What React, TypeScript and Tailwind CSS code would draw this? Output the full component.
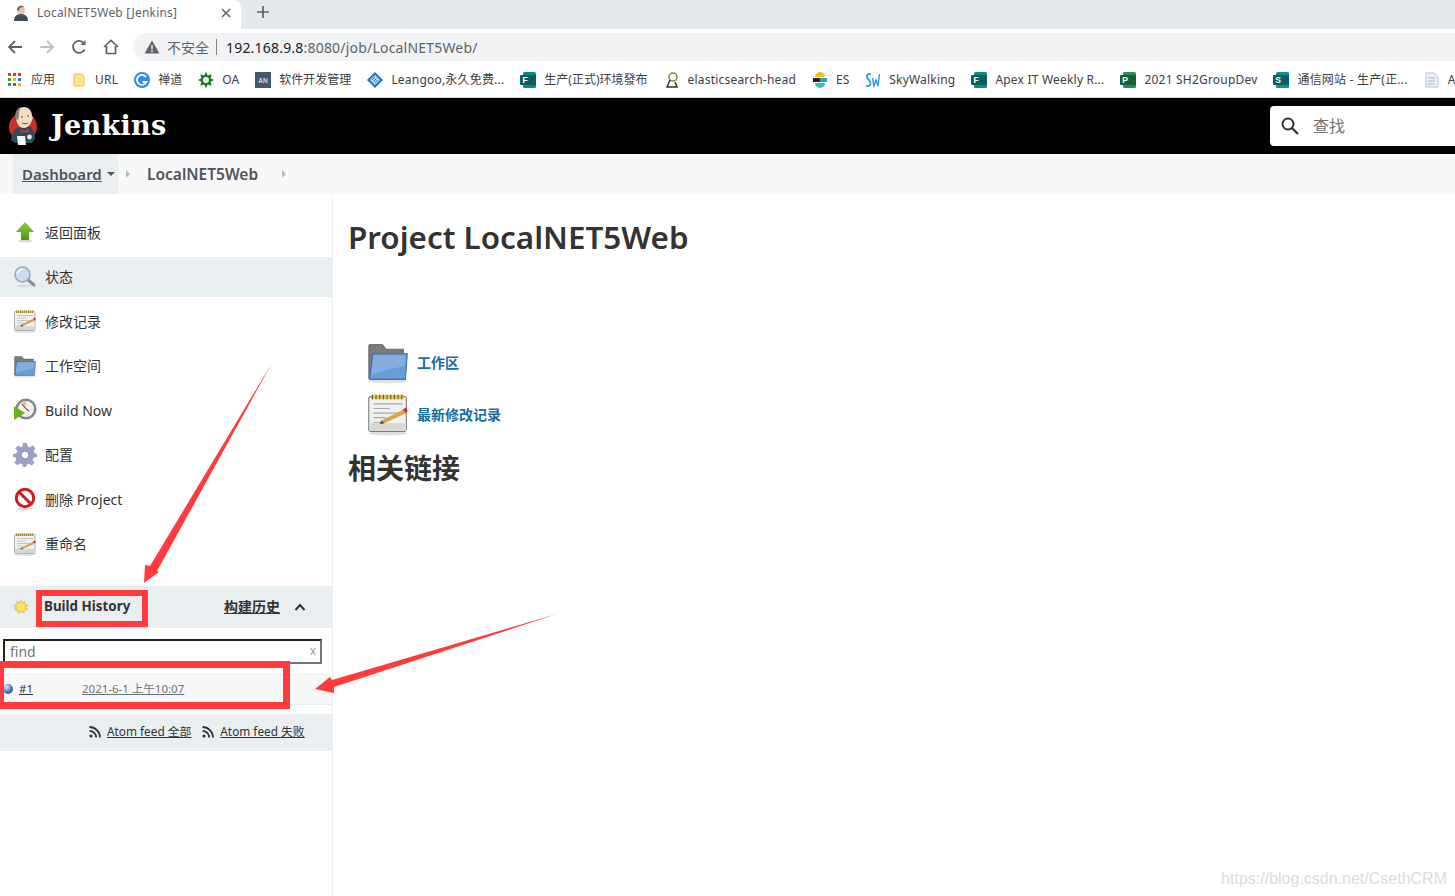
import React from "react";

const sans = "font-['Noto_Sans','Noto_Sans_CJK_SC',sans-serif]";

function JenkinsFace({ className }: { className?: string }) {
  return (
    <svg className={className} viewBox="0 0 32 42" aria-hidden="true">
      <circle cx="16" cy="22" r="14" fill="#c9302c" />
      <path d="M4 35c1-8 4-12 9-13l7-1c5 1 8 5 8 13l-3 4H8z" fill="#2f4a5a" />
      <path d="M9 13C8 6 12 2 17 2s8 4 8 9c1 0 1 3 0 4-1 4-4 8-8 8s-7-3-8-10z" fill="#f3dcc2" />
      <path d="M9 14C7 8 10 3 14 2c-2 3-2 6-2 9l-1 4z" fill="#8d8177" />
      <path d="M13 24l4 2 5-2-1 4-4-1-3 1z" fill="#d8312c" />
      <path d="M10 31h8l1 9h-8z" fill="#f4f4f4" />
      <circle cx="22.500" cy="32" r="2.400" fill="#e8e8e8" />
      <path d="M14 12h2M20 11h2M15 18c2 1 4 1 6 0" stroke="#5a4a42" strokeWidth="1" fill="none" />
    </svg>
  );
}

function UpIcon() {
  return (
    <svg className="size-6" viewBox="0 0 24 24" aria-hidden="true">
      <defs>
        <linearGradient id="up" x1="0" y1="0" x2="0" y2="1">
          <stop offset="0" stopColor="#8ecb4a" />
          <stop offset="1" stopColor="#4c9a12" />
        </linearGradient>
      </defs>
      <ellipse cx="12" cy="21" rx="7" ry="1.500" fill="#d8d8d8" />
      <path d="M12 2l9 10h-5v8H8v-8H3z" fill="url(#up)" />
    </svg>
  );
}

function SearchIcon() {
  return (
    <svg className="size-6" viewBox="0 0 24 24" aria-hidden="true">
      <ellipse cx="11" cy="21" rx="8" ry="1.500" fill="#dcdcdc" />
      <path d="M14.500 14.500l6.500 5.500" stroke="#8b8f93" strokeWidth="3" strokeLinecap="round" />
      <circle cx="9.500" cy="9.500" r="7.500" fill="#c9dcf2" stroke="#9aa6b4" strokeWidth="1.500" />
      <path d="M4.500 9a5 5 0 0 1 5-5" stroke="#fff" strokeWidth="1.600" fill="none" />
    </svg>
  );
}

function NotepadIcon({ className = "size-6" }: { className?: string }) {
  return (
    <svg className={className} viewBox="0 0 48 48" aria-hidden="true">
      <ellipse cx="24" cy="45" rx="21" ry="2.500" fill="#dedede" />
      <rect x="3" y="5" width="41" height="38" rx="2" fill="#f1f1f1" stroke="#7d7d7d" strokeWidth="1.200" />
      <rect x="3.600" y="34" width="39.800" height="8.400" fill="#d8d8d8" />
      <path d="M6 3h35v5H6z" fill="#e1c75a" />
      <path d="M7 3v5M11 3v5M15 3v5M19 3v5M23 3v5M27 3v5M31 3v5M35 3v5M39 3v5" stroke="#6b5c16" strokeWidth="1.200" />
      <path d="M8 13h32M8 18h18M8 23h30M8 28h14M8 33h14" stroke="#a9a9a9" strokeWidth="1.200" />
      <path d="M15 35l2-4 24-12 3 4-24 11z" fill="#dca24a" />
      <path d="M15 35l2-4 3 3z" fill="#5b4630" />
      <path d="M40 19l4-2 1.500 4-2 2z" fill="#e0262c" />
    </svg>
  );
}

function FolderIcon({ className = "size-6" }: { className?: string }) {
  return (
    <svg className={className} viewBox="0 0 48 48" aria-hidden="true">
      <ellipse cx="24" cy="45" rx="22" ry="2.200" fill="#e0e0e0" />
      <path d="M3 6a1 1 0 0 1 1-1h14l4 5h19v32H3z" fill="#7b7b7b" stroke="#555" strokeWidth=".8" />
      <path d="M7 15h38l-2 28H4z" fill="#6c9cd6" stroke="#3f6ca6" strokeWidth="1.200" />
      <path d="M8 17h35l-.8 12C30 30 16 34 6 38z" fill="#84aee0" />
    </svg>
  );
}

function ClockIcon() {
  return (
    <svg className="size-6" viewBox="0 0 24 24" aria-hidden="true">
      <circle cx="13" cy="11" r="10.500" fill="#85839b" />
      <circle cx="13" cy="11" r="8" fill="#f4f1e8" />
      <path d="M13 11L9 4.500A8 8 0 0 1 13 3z" fill="#e3cb73" />
      <path d="M13 11L9 6M13 11l3 2" stroke="#333" strokeWidth="1" />
      <path d="M1 8l11 7-11 7z" fill="#69b31b" />
    </svg>
  );
}

function GearIcon() {
  return (
    <svg className="size-6" viewBox="0 0 24 24" aria-hidden="true">
      <path
        d="M10 0h4l.7 3.400 2.200.9L19.800 2.400l2.800 2.800-1.900 2.900.9 2.200L24 11v3l-3.400.7-.9 2.200 1.900 2.900-2.800 2.800-2.900-1.900-2.200.9L13 24h-3l-.7-2.800-2.200-.9-2.900 1.900-2.800-2.800 1.900-2.900-.9-2.200L0 14v-3l3.400-.7.9-2.200L2.400 5.200l2.800-2.800 2.900 1.900 1.200-.9z"
        fill="#9aa0c6"
      />
      <circle cx="12" cy="12" r="4" fill="#fff" stroke="#7d82a6" />
    </svg>
  );
}

function NoIcon() {
  return (
    <svg className="size-6" viewBox="0 0 24 24" aria-hidden="true">
      <ellipse cx="12" cy="22" rx="8" ry="1.500" fill="#dcdcdc" />
      <circle cx="12" cy="11" r="8.700" fill="#fff" stroke="#cc1f1f" strokeWidth="3" />
      <path d="M6 5l12 12" stroke="#cc1f1f" strokeWidth="3" />
    </svg>
  );
}

function Sun() {
  return (
    <svg className="size-4" viewBox="0 0 16 16" aria-hidden="true">
      <path d="M8 0l1.500 3 3-1.500L12.200 5 16 6l-2.500 2.300L15.500 11l-3.500.5L11 15l-3-2-3 2-1-3.500L.5 11l2-2.700L0 6l3.800-1L3.500 1.500l3 1.500z" fill="#f3c17a" />
      <circle cx="8" cy="8" r="4.200" fill="#fbe74e" />
    </svg>
  );
}

function Rss() {
  return (
    <svg className="size-[12px] shrink-0" viewBox="0 0 12 12" aria-hidden="true">
      <circle cx="2" cy="10" r="1.600" fill="#333" />
      <path d="M.5 4.800a6.700 6.700 0 0 1 6.700 6.700M.5 1a10.500 10.500 0 0 1 10.500 10.500" stroke="#333" strokeWidth="1.800" fill="none" />
    </svg>
  );
}

function OfficeIcon({ letter, color, dark }: { letter: string; color: string; dark: string }) {
  return (
    <svg className="size-4 shrink-0" viewBox="0 0 16 16" aria-hidden="true">
      <rect x="3" y="0" width="13" height="16" rx="1.500" fill={color} />
      <rect x="9" y="3" width="7" height="10" fill={dark} />
      <rect x="0" y="3" width="10" height="10" rx="1" fill={dark} />
      <text x="5" y="11" textAnchor="middle" fontSize="8.500" fontWeight="700" fill="#fff" fontFamily="Liberation Sans, sans-serif">
        {letter}
      </text>
    </svg>
  );
}

const bookmarks: { label: string; latin?: boolean; icon: React.ReactNode }[] = [
  {
    label: "URL",
    latin: true,
    icon: (
      <svg className="size-4 shrink-0" viewBox="0 0 16 16" aria-hidden="true">
        <path d="M3 2h8l2 2v10H3z" fill="#ffe28a" stroke="#f0c64a" />
      </svg>
    ),
  },
  {
    label: "禅道",
    icon: (
      <svg className="size-4 shrink-0" viewBox="0 0 16 16" aria-hidden="true">
        <circle cx="8" cy="8" r="8" fill="#2a8fe8" />
        <path d="M12 5a5 5 0 1 0 .5 5H8.500" stroke="#fff" strokeWidth="1.800" fill="none" />
      </svg>
    ),
  },
  {
    label: "OA",
    latin: true,
    icon: (
      <svg className="size-4 shrink-0" viewBox="0 0 16 16" aria-hidden="true">
        <path d="M8 0l1.800 3.500L13.700 2.300 12.500 6.200 16 8l-3.500 1.800 1.200 3.900-3.900-1.200L8 16l-1.800-3.500-3.900 1.200 1.200-3.900L0 8l3.500-1.800L2.300 2.300l3.900 1.200z" fill="#0f7d16" />
        <circle cx="8" cy="8" r="3" fill="#fff" />
      </svg>
    ),
  },
  {
    label: "软件开发管理",
    icon: (
      <svg className="size-4 shrink-0" viewBox="0 0 16 16" aria-hidden="true">
        <rect width="16" height="16" fill="#44586f" />
        <text x="8" y="10.500" textAnchor="middle" fontSize="6.500" fontWeight="700" fill="#d5dbe2" fontFamily="Liberation Sans, sans-serif">
          AN
        </text>
      </svg>
    ),
  },
  {
    label: "Leangoo,永久免费...",
    latin: true,
    icon: (
      <svg className="size-4 shrink-0" viewBox="0 0 16 16" aria-hidden="true">
        <path d="M8 0l8 8-8 8-8-8z" fill="#1b78c2" />
        <path d="M8 3l5 5-5 5-5-5z" fill="#bcdcf4" />
        <path d="M5 8l3-3M6.500 9.500l3-3M8 11l3-3" stroke="#1b78c2" />
      </svg>
    ),
  },
  { label: "生产(正式)环境發布", icon: <OfficeIcon letter="F" color="#0a8a84" dark="#075f5c" /> },
  {
    label: "elasticsearch-head",
    latin: true,
    icon: (
      <svg className="size-4 shrink-0" viewBox="0 0 16 16" aria-hidden="true">
        <circle cx="9" cy="5" r="4" fill="none" stroke="#6e8f3c" strokeWidth="1.500" />
        <path d="M6 8L3 15h10l-2-5" fill="none" stroke="#333" strokeWidth="1.500" />
      </svg>
    ),
  },
  {
    label: "ES",
    icon: (
      <svg className="size-4 shrink-0" viewBox="0 0 16 16" aria-hidden="true">
        <path d="M3 5a5 5 0 0 1 10 0z" fill="#f0bf1a" />
        <rect x="1" y="6" width="7" height="4" fill="#222" />
        <rect x="8" y="6" width="7" height="4" fill="#1ba9c7" />
        <path d="M3 11h10a5 5 0 0 1-10 0z" fill="#3ebeb0" />
      </svg>
    ),
  },
  {
    label: "SkyWalking",
    latin: true,
    icon: (
      <svg className="size-4 shrink-0" viewBox="0 0 16 16" aria-hidden="true">
        <path d="M6 2.500C3 1 1 3 2 5.500c1 2 4 3 3.500 6C5 14 2.500 14.500 1 13.500" fill="none" stroke="#2b9be8" strokeWidth="1.800" />
        <path d="M7.500 6l1.500 8 2-6 2 6 1.500-12" fill="none" stroke="#2b9be8" strokeWidth="1.400" />
      </svg>
    ),
  },
  { label: "Apex IT Weekly R...", latin: true, icon: <OfficeIcon letter="F" color="#0a8a84" dark="#075f5c" /> },
  { label: "2021 SH2GroupDev", latin: true, icon: <OfficeIcon letter="P" color="#2e8b57" dark="#14603a" /> },
  { label: "通信网站 - 生产(正...", latin: true, icon: <OfficeIcon letter="S" color="#0f8f95" dark="#075f66" /> },
  {
    label: "A",
    icon: (
      <svg className="size-4 shrink-0" viewBox="0 0 16 16" aria-hidden="true">
        <path d="M2 1h8l4 4v10H2z" fill="#eef1f5" stroke="#b8c2d0" />
        <path d="M4 6h7M4 9h7M4 12h7" stroke="#9fb6d4" />
      </svg>
    ),
  },
];

const tasks: { label: string; icon: React.ReactNode; active?: boolean }[] = [
  { label: "返回面板", icon: <UpIcon /> },
  { label: "状态", icon: <SearchIcon />, active: true },
  { label: "修改记录", icon: <NotepadIcon /> },
  { label: "工作空间", icon: <FolderIcon /> },
  { label: "Build Now", icon: <ClockIcon /> },
  { label: "配置", icon: <GearIcon /> },
  { label: "删除 Project", icon: <NoIcon /> },
  { label: "重命名", icon: <NotepadIcon /> },
];

function BrowserChrome() {
  return (
    <div className="bg-white">
      <div className="flex h-[29px] items-center bg-[#e6e9ec] pb-[5px]">
        <div className="-mb-[5px] flex h-[29px] w-[241px] items-center rounded-tr-lg bg-white pb-[4px] pl-[13px] pr-[10px]">
          <svg className="size-4 shrink-0" viewBox="0 0 16 16" aria-hidden="true">
            <circle cx="8" cy="5.500" r="4" fill="#e6c8ae" />
            <path d="M4 5a4 4 0 0 1 7-3C8 2 6 3 6 6z" fill="#7d6a5e" />
            <path d="M1 16c0-5 3-7 7-7s7 2 7 7z" fill="#3a4f5e" />
            <path d="M6 10h4l-2 2z" fill="#c9302c" />
          </svg>
          <span className="ml-2 flex-1 text-[12px] tracking-[0.2px] text-[#5f6368]">LocalNET5Web [Jenkins]</span>
          <svg className="size-[10px]" viewBox="0 0 10 10" aria-hidden="true">
            <path d="M1 1l8 8M9 1L1 9" stroke="#5f6368" strokeWidth="1.500" />
          </svg>
        </div>
        <svg className="ml-[15px] size-[14px]" viewBox="0 0 14 14" aria-hidden="true">
          <path d="M7 1v12M1 7h12" stroke="#5f6368" strokeWidth="1.700" />
        </svg>
      </div>
      <div className="flex h-[33px] items-center pl-[7px] pt-[3px]">
        <svg className="size-4" viewBox="0 0 16 16" aria-hidden="true">
          <path d="M15 8H2M8 2L2 8l6 6" stroke="#5f6368" strokeWidth="1.800" fill="none" />
        </svg>
        <svg className="ml-4 size-4" viewBox="0 0 16 16" aria-hidden="true">
          <path d="M1 8h13M8 2l6 6-6 6" stroke="#bcc0c4" strokeWidth="1.800" fill="none" />
        </svg>
        <svg className="ml-4 size-4" viewBox="0 0 16 16" aria-hidden="true">
          <path d="M13.500 10.500A6 6 0 1 1 13 4.500" stroke="#5f6368" strokeWidth="1.800" fill="none" />
          <path d="M14.500 1v5h-5z" fill="#5f6368" />
        </svg>
        <svg className="ml-4 size-4" viewBox="0 0 16 16" aria-hidden="true">
          <path d="M1 8l7-6.500L15 8M3.500 7v7.500h9V7" stroke="#5f6368" strokeWidth="1.700" fill="none" />
        </svg>
        <div className="ml-[14px] flex h-[28px] flex-1 items-center rounded-l-full bg-[#f1f3f4] pl-[11px]">
          <svg className="size-4" viewBox="0 0 16 16" aria-hidden="true">
            <path d="M8 1.500L15.500 14.500H.500z" fill="#5f6368" />
            <path d="M8 6v4.500M8 11.500v1.500" stroke="#f1f3f4" strokeWidth="1.500" />
          </svg>
          <span className="ml-[7px] text-[14px] text-[#5f6368]">不安全</span>
          <span className="ml-[7px] h-[16px] w-px bg-[#80868b]" />
          <span className="ml-[9px] text-[14px] tracking-[0.2px] text-[#202124]">
            192.168.9.8<span className="text-[#5f6368]">:8080/job/LocalNET5Web/</span>
          </span>
        </div>
      </div>
      <div className="flex h-[36px] items-center gap-4 overflow-hidden whitespace-nowrap border-b border-[#d5d7da] pl-2 text-[12px] text-[#3c4043]">
        <div className="flex shrink-0 items-center gap-[10px]">
          <div className="grid size-[13px] grid-cols-3 gap-[2px]">
            <i className="bg-[#e0362c]" />
            <i className="bg-[#e0362c]" />
            <i className="bg-[#e0362c]" />
            <i className="bg-[#2f9e44]" />
            <i className="bg-[#f6b400]" />
            <i className="bg-[#1a73e8]" />
            <i className="bg-[#2f9e44]" />
            <i className="bg-[#1a73e8]" />
            <i className="bg-[#f6b400]" />
          </div>
          <span>应用</span>
        </div>
        {bookmarks.map((b) => (
          <div key={b.label} className="flex shrink-0 items-center gap-2">
            {b.icon}
            <span className={b.latin ? "tracking-[0.2px]" : ""}>{b.label}</span>
          </div>
        ))}
      </div>
    </div>
  );
}

function JenkinsHeader() {
  return (
    <div className="flex h-[56px] items-center overflow-hidden bg-black pl-[7px]">
      <JenkinsFace className="h-[42px] w-[32px]" />
      <span className="ml-[12px] font-['DejaVu_Serif',serif] text-[27px] font-bold tracking-[0.3px] text-white">
        Jenkins
      </span>
      <div className="-mr-[40px] ml-auto flex h-[40px] w-[225px] items-center rounded-[4px] bg-white pl-[10px]">
        <svg className="size-[20px]" viewBox="0 0 20 20" aria-hidden="true">
          <circle cx="8" cy="8" r="5.500" stroke="#333" strokeWidth="2" fill="none" />
          <path d="M12 12l6 6" stroke="#333" strokeWidth="2.200" />
        </svg>
        <span className="ml-[13px] text-[16px] text-[#757575]">查找</span>
      </div>
    </div>
  );
}

function Breadcrumb() {
  return (
    <div className="flex h-[40px] items-center bg-[#f8f8f8] pl-[13px] font-semibold leading-[24px] text-[#4d545d]">
      <div className="flex h-full w-[105px] items-center bg-[#e9eef1] pl-[9px]">
        <span className="text-[15px] underline">Dashboard</span>
        <span className="ml-[5px] h-0 w-0 border-x-[4px] border-t-[4px] border-x-transparent border-t-[#4d545d]" />
      </div>
      <span className="ml-[8px] h-0 w-0 border-y-[4px] border-l-[4px] border-y-transparent border-l-[#b8bcc0]" />
      <span className="ml-[17px] text-[15.500px]">LocalNET5Web</span>
      <span className="ml-[24px] h-0 w-0 border-y-[4px] border-l-[4px] border-y-transparent border-l-[#b8bcc0]" />
    </div>
  );
}

function Sidebar() {
  return (
    <aside className="flex w-[333px] shrink-0 flex-col border-r border-[#f0f0f0] pt-[18px]">
      <div className="flex flex-col gap-[4.500px]">
        {tasks.map((t) => (
          <div
            key={t.label}
            className={`flex h-[40px] items-center pl-[13px] text-[14px] text-[#333] ${t.active ? "bg-[#e9eef1]" : ""}`}
          >
            {t.icon}
            <span className="ml-[8px]">{t.label}</span>
          </div>
        ))}
      </div>
      <div className="mt-[22px] flex h-[42px] items-center bg-[#e9eef1] pl-[13px] text-[14px] text-[#333]">
        <Sun />
        <span className="ml-[15px] text-[13.400px] font-bold">Build History</span>
        <span className="ml-auto font-semibold underline">构建历史</span>
        <svg className="ml-[14px] mr-[26px] size-[12px]" viewBox="0 0 12 12" aria-hidden="true">
          <path d="M1.500 9L6 4l4.500 5" stroke="#333" strokeWidth="2" fill="none" />
        </svg>
      </div>
      <div className="ml-[3px] mr-[10px] mt-[11px] flex h-[25px] items-center justify-between border-2 border-[#767676] border-l-[#222] border-t-[#222] pl-[5px] pr-[4px] text-[14px] text-[#757575]">
        <span>find</span>
        <span className="text-[12px] text-[#9aa0a6]">x</span>
      </div>
      <div className="mt-[10px] flex h-[31px] items-center border-y border-[#e9eef1] bg-[#f8f8f8] pl-[3px] text-[11.500px]">
        <span className="size-[10px] rounded-full bg-[radial-gradient(circle_at_35%_30%,#dbe8f7,#3f6ba8_60%,#23406b)]" />
        <span className="ml-[6px] w-[63px] text-[#333] underline">#1</span>
        <span className="text-[#6b7278] underline">2021-6-1 上午10:07</span>
      </div>
      <div className="mt-[9px] flex h-[37px] items-center bg-[#e9eef1] pl-[89px] text-[11.800px] text-[#333]">
        <Rss />
        <span className="ml-[6px] underline">Atom feed 全部</span>
        <span className="ml-[11px]">
          <Rss />
        </span>
        <span className="ml-[6px] underline">Atom feed 失败</span>
      </div>
    </aside>
  );
}

function Annotations() {
  return (
    <>
      <div className="absolute left-[36px] top-[590px] h-[37px] w-[112px] border-[6px] border-[#ff3b3b]" />
      <div className="absolute left-0 top-[661px] h-[48px] w-[290px] border-[7px] border-l-[4px] border-[#ff3b3b]" />
      <svg className="absolute left-0 top-0 h-[896px] w-[1455px]" viewBox="0 0 1455 896" aria-hidden="true">
        <polygon points="272,363 157,571 159,572 144,583 145,565 150,566" fill="#ff3b3b" />
        <polygon points="557,614 334,687 334,693 315,689 330,677 332,680" fill="#ff3b3b" />
      </svg>
      <span className="absolute right-[8px] top-[867px] font-['Liberation_Sans',sans-serif] text-[16px] text-[#dcdcdc]">
        https://blog.csdn.net/CsethCRM
      </span>
    </>
  );
}

export default function App() {
  return (
    <div className={`relative flex h-[896px] w-[1455px] flex-col overflow-hidden bg-white ${sans}`}>
      <BrowserChrome />
      <JenkinsHeader />
      <Breadcrumb />
      <div className="flex flex-1">
        <Sidebar />
        <main className="pl-[15px] pt-[21px] text-[#333]">
          <h1 className="text-[31.400px] font-semibold leading-[44px]">Project LocalNET5Web</h1>
          <div className="ml-[18px] mt-[81px] flex items-center">
            <FolderIcon className="size-[44px]" />
            <span className="ml-[7px] text-[14px] font-semibold text-[#1a6ba0]">工作区</span>
          </div>
          <div className="ml-[18px] mt-[8px] flex items-center">
            <NotepadIcon className="size-[44px]" />
            <span className="ml-[7px] text-[14px] font-semibold text-[#1a6ba0]">最新修改记录</span>
          </div>
          <h2 className="mt-[13px] text-[28px] font-bold leading-[38px]">相关链接</h2>
        </main>
      </div>
      <Annotations />
    </div>
  );
}
